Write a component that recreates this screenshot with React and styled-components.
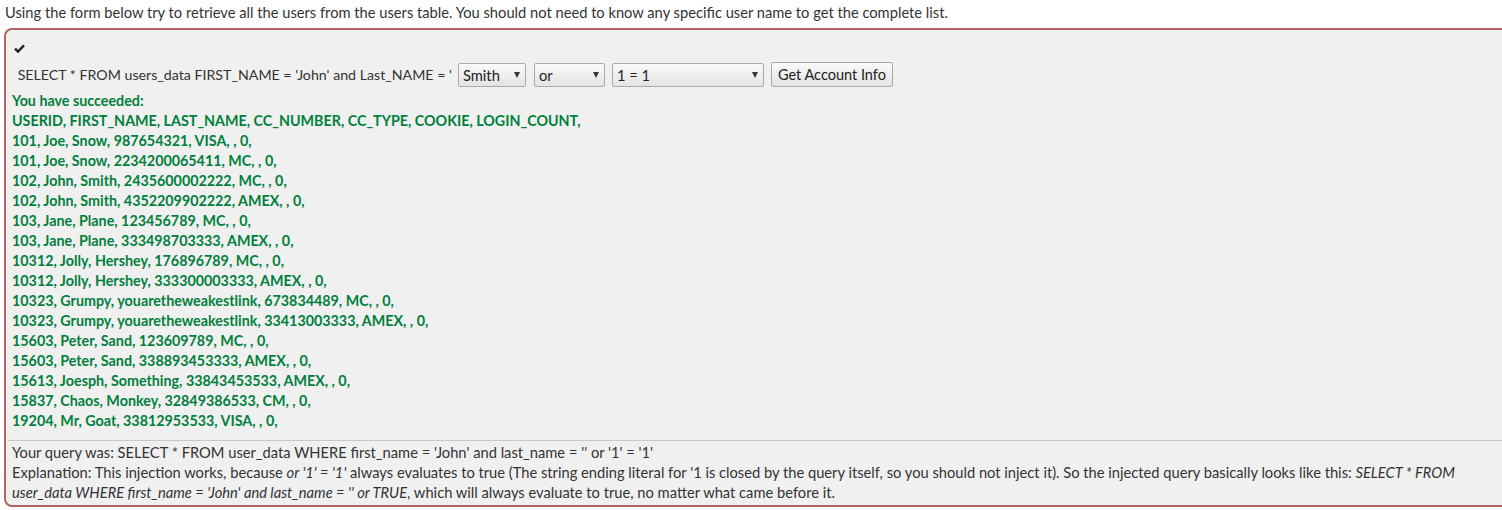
import React from "react";
import styled, { createGlobalStyle } from "styled-components";

const Global = createGlobalStyle`
    html, body {
        margin: 0;
        padding: 0;
        background: #fff;
    }
    body {
        font-family: "Source Sans Pro", Lato, "Liberation Sans", sans-serif;
        font-size: 14.7px;
        color: #333;
        overflow: hidden;
    }
`;

const Page = styled.div`
    width: 1502px;
    overflow: hidden;
    padding: 0 0 0 4px;
    box-sizing: border-box;
`;

const Intro = styled.p`
    margin: 0;
    padding: 2px 0 0 1px;
    height: 28px;
    line-height: 20px;
    box-sizing: border-box;
`;

const Panel = styled.div`
    width: 1530px;
    height: 479px;
    box-sizing: border-box;
    border: 2px solid #b06464;
    border-radius: 8px;
    background-color: #f0f0f0;
    padding: 8px 0 0 6px;
`;

const Check = styled.div`
    height: 20px;
    display: flex;
    align-items: center;
    padding-left: 2px;
`;

const Form = styled.form`
    display: flex;
    align-items: center;
    height: 33px;
    padding-left: 2px;
`;

const Label = styled.span`
    white-space: pre;
    font-size: 14.2px;
    margin-right: 6px;
`;

const SelectBox = styled.div`
    position: relative;
    width: ${(p) => p.$w}px;
    height: 24px;
    margin-right: ${(p) => p.$gap}px;
    box-sizing: border-box;
    border: 1px solid #a9a9a9;
    border-radius: 2px;
    background: linear-gradient(#fafafa, #e3e3e3);
    display: flex;
    align-items: center;
    padding-left: 4px;
    color: #222;
`;

const Arrow = styled.span`
    position: absolute;
    right: 5px;
    top: 8px;
    width: 0;
    height: 0;
    border-left: 3.5px solid transparent;
    border-right: 3.5px solid transparent;
    border-top: 6px solid #333;
`;

const Button = styled.button`
    height: 25px;
    width: 122px;
    padding: 0;
    box-sizing: border-box;
    border: 1px solid #a9a9a9;
    border-radius: 2px;
    background: linear-gradient(#fafafa, #e3e3e3);
    font-family: inherit;
    font-size: 14.5px;
    color: #222;
`;

const Feedback = styled.div`
    color: #00803c;
    font-weight: bold;
    font-size: 14.3px;
    line-height: 20px;
`;

const Rule = styled.hr`
    border: none;
    border-top: 1px solid #c8c8c8;
    margin: 9px 0 1px -4px;
`;

const Output = styled.div`
    line-height: 20px;
    width: 1480px;
    padding-right: 10px;
    box-sizing: border-box;
`;

const rows = [
    "You have succeeded:",
    "USERID, FIRST_NAME, LAST_NAME, CC_NUMBER, CC_TYPE, COOKIE, LOGIN_COUNT,",
    "101, Joe, Snow, 987654321, VISA, , 0,",
    "101, Joe, Snow, 2234200065411, MC, , 0,",
    "102, John, Smith, 2435600002222, MC, , 0,",
    "102, John, Smith, 4352209902222, AMEX, , 0,",
    "103, Jane, Plane, 123456789, MC, , 0,",
    "103, Jane, Plane, 333498703333, AMEX, , 0,",
    "10312, Jolly, Hershey, 176896789, MC, , 0,",
    "10312, Jolly, Hershey, 333300003333, AMEX, , 0,",
    "10323, Grumpy, youaretheweakestlink, 673834489, MC, , 0,",
    "10323, Grumpy, youaretheweakestlink, 33413003333, AMEX, , 0,",
    "15603, Peter, Sand, 123609789, MC, , 0,",
    "15603, Peter, Sand, 338893453333, AMEX, , 0,",
    "15613, Joesph, Something, 33843453533, AMEX, , 0,",
    "15837, Chaos, Monkey, 32849386533, CM, , 0,",
    "19204, Mr, Goat, 33812953533, VISA, , 0,",
];

const Select = ({ w, gap, children }) => (
    <SelectBox $w={w} $gap={gap}>
        {children}
        <Arrow />
    </SelectBox>
);

const App = () => {
    return (
        <Page>
            <Global />
            <Intro>
                Using the form below try to retrieve all the users from the users table. You should not need to know any specific user name to get the complete list.
            </Intro>
            <Panel>
                <Check>
                    <svg width="11" height="9" viewBox="0 0 11 9">
                        <path d="M1 4.6 L4 7.6 L10 1.4" fill="none" stroke="#222" strokeWidth="2.4" />
                    </svg>
                </Check>
                <Form>
                    <Label> SELECT * FROM users_data FIRST_NAME = 'John' and Last_NAME = '</Label>
                    <Select w={68} gap={8}>Smith</Select>
                    <Select w={71} gap={7}>or</Select>
                    <Select w={152} gap={7}>1 = 1</Select>
                    <Button type="button">Get Account Info</Button>
                </Form>
                <Feedback>
                    {rows.map((r) => (
                        <div key={r}>{r}</div>
                    ))}
                </Feedback>
                <Rule />
                <Output>
                    <div>Your query was: SELECT * FROM user_data WHERE first_name = 'John' and last_name = '' or '1' = '1'</div>
                    <div>
                        Explanation: This injection works, because <i>or '1' = '1'</i> always evaluates to true (The string ending literal for '1 is closed by the query itself, so you should not inject it). So the injected query basically looks like this: <i>SELECT * FROM user_data WHERE first_name = 'John' and last_name = '' or TRUE</i>, which will always evaluate to true, no matter what came before it.
                    </div>
                </Output>
            </Panel>
        </Page>
    );
};

export default App;
